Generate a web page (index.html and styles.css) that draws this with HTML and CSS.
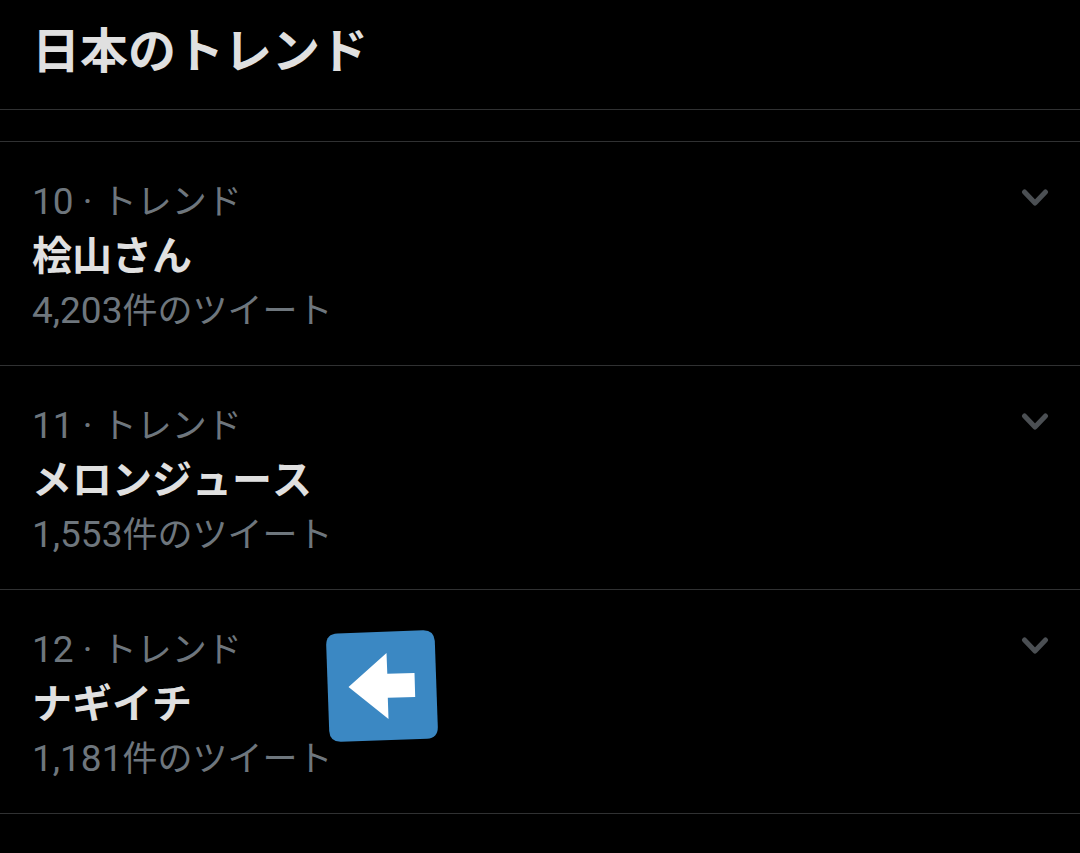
FILE: index.html
```html
<!DOCTYPE html>
<html lang="ja">
<head>
<meta charset="utf-8">
<meta name="viewport" content="width=device-width, initial-scale=1">
<title>日本のトレンド</title>
<link rel="stylesheet" href="styles.css">
</head>
<body>
<header class="header">
  <h1 class="title">日本のトレンド</h1>
</header>
<main class="trends">
  <article class="trend">
    <div class="trend-body">
      <p class="meta">10 · <span class="kana">トレンド</span></p>
      <h2 class="name">桧山さん</h2>
      <p class="meta">4,203<span class="kana">件のツイート</span></p>
    </div>
    <button class="more" type="button" aria-label="メニュー">
      <svg class="chevron" viewBox="0 0 28 20" aria-hidden="true"><path d="M3.5 4 14 15 24.500 4"/></svg>
    </button>
  </article>
  <article class="trend">
    <div class="trend-body">
      <p class="meta">11 · <span class="kana">トレンド</span></p>
      <h2 class="name">メロンジュース</h2>
      <p class="meta">1,553<span class="kana">件のツイート</span></p>
    </div>
    <button class="more" type="button" aria-label="メニュー">
      <svg class="chevron" viewBox="0 0 28 20" aria-hidden="true"><path d="M3.5 4 14 15 24.500 4"/></svg>
    </button>
  </article>
  <article class="trend">
    <div class="trend-body">
      <p class="meta">12 · <span class="kana">トレンド</span></p>
      <h2 class="name">ナギイチ</h2>
      <p class="meta">1,181<span class="kana">件のツイート</span></p>
    </div>
    <button class="more" type="button" aria-label="メニュー">
      <svg class="chevron" viewBox="0 0 28 20" aria-hidden="true"><path d="M3.5 4 14 15 24.500 4"/></svg>
    </button>
    <svg class="sticker" viewBox="0 0 112 112" aria-hidden="true">
      <path class="sticker-tile" d="M11.500 3.500 97 .2Q108 0 108.800 11L111.800 97Q112 108 101 108.800L15 111.800Q4 112 3.200 101L.2 15Q0 4 11.500 3.500Z"/>
      <path class="sticker-arrow" d="M22.500 57 60.500 23 61.300 43.700 88.500 43 89.200 67 61.800 67.700 62.500 89Z"/>
    </svg>
  </article>
</main>
</body>
</html>
```
FILE: styles.css
```css
* {
  box-sizing: border-box;
}

body {
  margin: 0;
  background: #000;
  color: #e0e0e0;
  font-family: Roboto, "Noto Sans CJK JP", sans-serif;
}

h1,
h2,
p {
  margin: 0;
}

.header {
  padding: 16px 32px 21px;
  border-bottom: 1px solid #303132;
}

.title {
  font-size: 48px;
  line-height: 72px;
  font-weight: 700;
}

.trends {
  margin-top: 31px;
  border-top: 1px solid #303132;
}

.trend {
  position: relative;
  display: flex;
  justify-content: space-between;
  align-items: flex-start;
  padding: 33px 31px 26px 32px;
  border-bottom: 1px solid #303132;
}

.meta {
  color: #6e767d;
  font-size: 37px;
  line-height: 54px;
}

.kana {
  font-size: 35px;
}

.name {
  font-size: 40px;
  line-height: 54px;
  font-weight: 700;
  font-kerning: none;
}

.more {
  display: flex;
  margin-top: 13px;
  padding: 0;
  border: 0;
  background: none;
  cursor: pointer;
}

.chevron {
  width: 28px;
  height: 20px;
  fill: none;
  stroke: #4b4f53;
  stroke-width: 5;
  stroke-linecap: round;
  stroke-linejoin: round;
}

.sticker {
  position: absolute;
  left: 326px;
  top: 40px;
  width: 112px;
  height: 112px;
}

.sticker-tile {
  fill: #3b88c3;
}

.sticker-arrow {
  fill: #fff;
}
```
